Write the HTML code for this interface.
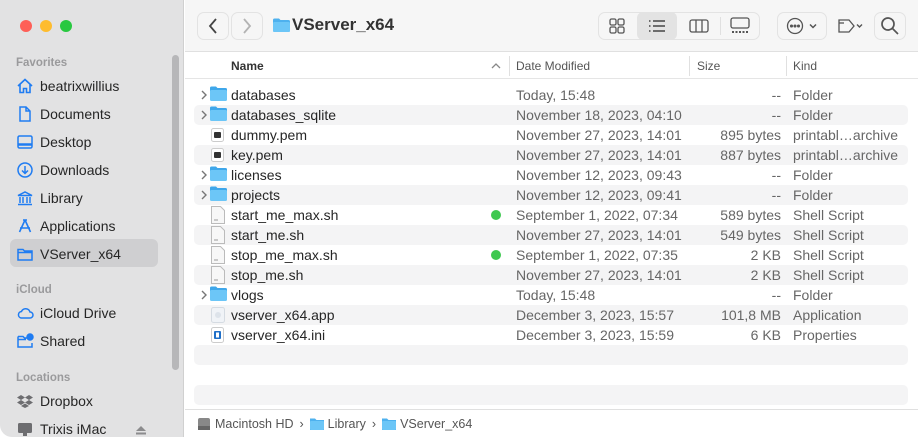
<!DOCTYPE html>
<html><head><meta charset="utf-8"><style>
*{margin:0;padding:0;box-sizing:border-box}
body{width:918px;height:437px;overflow:hidden;background:#fff;font-family:"Liberation Sans",sans-serif;position:relative}
.sb{position:absolute;left:0;top:0;width:184px;height:437px;background:#e2e2e3;border-right:1px solid #d0d0d0;border-bottom-left-radius:12px}
.dot{position:absolute;top:20px;width:12px;height:12px;border-radius:50%}
.sec{position:absolute;left:16px;font-size:11.5px;color:#9a9a9c;font-weight:bold}
.it{position:absolute;left:16px;font-size:14px;color:#262626;height:20px;line-height:20px;display:flex;align-items:center}
.it svg{width:18px;height:18px;margin-right:6px;flex:none}
.sel{position:absolute;left:10px;top:239px;width:148px;height:28px;background:#cfcfd1;border-radius:6px}
.scroll{position:absolute;left:172px;top:55px;width:7px;height:315px;background:#b7b7b9;border-radius:4px}
.tb{position:absolute;left:185px;top:0;right:0;height:52px;background:#f6f6f6;border-bottom:1px solid #e0e0e0;overflow:hidden}
.btn{position:absolute;top:12px;height:28px;border:1px solid #e3e3e3;border-radius:7px;background:#f6f6f6}
.hdr{position:absolute;left:185px;top:52px;right:0;height:27px;border-bottom:1px solid #e5e5e5;font-size:12px;color:#555}
.hdr span{position:absolute;top:7px}
.sep{position:absolute;top:4px;width:1px;height:20px;background:#e0e0e0}
.row{position:absolute;left:194px;width:714px;height:20px;border-radius:5px;font-size:14px;color:#262626}
.g{background:#f4f4f5}
.row span{position:absolute;top:2px;white-space:nowrap}
.c2,.c4{color:#666!important}
.c3{color:#666;right:127px;text-align:right}
.chev{position:absolute;left:6px;top:4px}
.ic{position:absolute;left:16px;top:1px}
.pb{position:absolute;left:185px;top:409px;right:0;height:28px;border-top:1px solid #e0e0e0;font-size:12.5px;color:#555;display:flex;align-items:center;padding-left:12px}
.pb svg{margin-right:4px}
</style></head><body>
<div class="sb">
<div class="dot" style="left:20px;background:#fe5f57"></div>
<div class="dot" style="left:40px;background:#febc2e"></div>
<div class="dot" style="left:60px;background:#28c840"></div>
<div class="sec" style="top:57px">Favorites</div>
<div class="sel"></div>
<div class="scroll"></div>
<div class="it" style="top:76px"><svg viewBox="0 0 18 18" fill="none" stroke="#1f7cf2" stroke-width="1.6"><path d="M2 9L9 2.5 16 9M4 7.5V15.5h3.5v-4h3v4H14V7.5"/></svg>beatrixwillius</div>
<div class="it" style="top:104px"><svg viewBox="0 0 18 18" fill="none" stroke="#1f7cf2" stroke-width="1.5"><path d="M4 2h6l4 4v10H4z M10 2v4h4"/></svg>Documents</div>
<div class="it" style="top:132px"><svg viewBox="0 0 18 18" fill="none" stroke="#1f7cf2" stroke-width="1.5"><rect x="2" y="3" width="14" height="12" rx="1.5"/><path d="M2 11.5h14" stroke-width="2.5"/></svg>Desktop</div>
<div class="it" style="top:160px"><svg viewBox="0 0 18 18" fill="none" stroke="#1f7cf2" stroke-width="1.5"><circle cx="9" cy="9" r="7"/><path d="M9 5v7M6 9.5l3 3 3-3"/></svg>Downloads</div>
<div class="it" style="top:188px"><svg viewBox="0 0 18 18" fill="none" stroke="#1f7cf2" stroke-width="1.5"><path d="M2 6.5L9 3l7 3.5zM4 8v6M7 8v6M11 8v6M14 8v6M2 15.5h14"/></svg>Library</div>
<div class="it" style="top:216px"><svg viewBox="0 0 18 18" fill="none" stroke="#1f7cf2" stroke-width="1.6"><path d="M9 3L3.5 15M9 3l5.5 12M4 11h10M7 3h4"/></svg>Applications</div>
<div class="it" style="top:244px"><svg viewBox="0 0 18 18" fill="none" stroke="#1f7cf2" stroke-width="1.5"><path d="M2 4.5h5l1.5 1.5H16v9H2zM2 7.5h14"/></svg>VServer_x64</div>
<div class="sec" style="top:284px">iCloud</div>
<div class="it" style="top:303px"><svg viewBox="0 0 18 18" fill="none" stroke="#1f7cf2" stroke-width="1.5"><path d="M5 14h9a3 3 0 0 0 0-6 4.5 4.5 0 0 0-8.5-.5A3.3 3.3 0 0 0 5 14z"/></svg>iCloud Drive</div>
<div class="it" style="top:331px"><svg viewBox="0 0 18 18" fill="none" stroke="#1f7cf2" stroke-width="1.5"><path d="M2 4.5h5l1.5 1.5H11M2 4.5v10.5h14V11M2 7.5h8"/><circle cx="14" cy="5" r="3" fill="#1f7cf2"/></svg>Shared</div>
<div class="sec" style="top:372px">Locations</div>
<div class="it" style="top:391px"><svg viewBox="0 0 18 18" fill="#6d6d70"><path d="M5 3l4 2.5-4 2.5-4-2.5zM13 3l4 2.5-4 2.5-4-2.5zM5 8l4 2.5-4 2.5-4-2.5zM13 8l4 2.5-4 2.5-4-2.5zM9 11.5l4 2.5-4 2-4-2z"/></svg>Dropbox</div>
<div class="it" style="top:419px"><svg viewBox="0 0 18 18" fill="#6d6d70"><rect x="2" y="3" width="14" height="10" rx="1.5"/><rect x="7" y="13" width="4" height="3"/></svg>Trixis iMac</div>
<svg style="position:absolute;left:135px;top:425px" width="12" height="10" viewBox="0 0 12 10" fill="#8b8b8d"><path d="M6 1l5 5H1z"/><rect x="1" y="7.5" width="10" height="2"/></svg>
</div>

<div class="tb">
<div class="btn" style="left:12px;width:32px"></div>
<div class="btn" style="left:46px;width:32px"></div>
<svg style="position:absolute;left:22px;top:17px" width="12" height="18" viewBox="0 0 12 18" fill="none" stroke="#444" stroke-width="1.8"><path d="M9 2L3 9l6 7"/></svg>
<svg style="position:absolute;left:56px;top:17px" width="12" height="18" viewBox="0 0 12 18" fill="none" stroke="#b3b3b3" stroke-width="1.8"><path d="M3 2l6 7-6 7"/></svg>
<svg style="position:absolute;left:88px;top:18px" width="17" height="14" viewBox="0 0 17 14"><path d="M0 2a1.5 1.5 0 0 1 1.5-1.5h4.5l1.5 1.5h8A1.5 1.5 0 0 1 17 3.5v9a1.5 1.5 0 0 1-1.5 1.5h-14A1.5 1.5 0 0 1 0 12.5z" fill="#4eb1ee"/><rect x="0" y="4" width="17" height="10" rx="1.5" fill="#6cc6f7"/></svg>
<div style="position:absolute;left:107px;top:15px;font-size:17px;font-weight:bold;color:#333">VServer_x64</div>
<div class="btn" style="left:413px;width:162px"></div>
<div style="position:absolute;left:452px;top:12px;width:40px;height:28px;background:#e3e3e3;border-radius:6px"></div>
<svg style="position:absolute;left:424px;top:18px" width="16" height="16" viewBox="0 0 16 16" fill="none" stroke="#555" stroke-width="1.3"><rect x="1" y="1" width="6" height="6" rx="1.5"/><rect x="9" y="1" width="6" height="6" rx="1.5"/><rect x="1" y="9" width="6" height="6" rx="1.5"/><rect x="9" y="9" width="6" height="6" rx="1.5"/></svg>
<svg style="position:absolute;left:463px;top:18px" width="18" height="16" viewBox="0 0 18 16" fill="none" stroke="#444" stroke-width="1.4"><path d="M5 3h12M5 8h12M5 13h12M1 3h1.5M1 8h1.5M1 13h1.5"/></svg>
<svg style="position:absolute;left:504px;top:18px" width="20" height="16" viewBox="0 0 20 16" fill="none" stroke="#555" stroke-width="1.3"><rect x="1" y="2" width="18" height="12" rx="2"/><path d="M7 2v12M13 2v12"/></svg>
<div style="position:absolute;left:535px;top:17px;width:1px;height:18px;background:#e0e0e0"></div>
<svg style="position:absolute;left:544px;top:17px" width="22" height="18" viewBox="0 0 22 18" fill="none" stroke="#555" stroke-width="1.3"><rect x="2" y="1" width="18" height="10" rx="2"/><path d="M3 15h16" stroke-dasharray="2 1.5" stroke-width="2"/></svg>
<div class="btn" style="left:592px;width:50px"></div>
<svg style="position:absolute;left:601px;top:17px" width="36" height="18" viewBox="0 0 36 18" fill="none" stroke="#555" stroke-width="1.3"><circle cx="9" cy="9" r="7.5"/><circle cx="5.5" cy="9" r=".9" fill="#555"/><circle cx="9" cy="9" r=".9" fill="#555"/><circle cx="12.5" cy="9" r=".9" fill="#555"/><path d="M24 7.5l3 3 3-3" stroke-width="1.5"/></svg>
<svg style="position:absolute;left:652px;top:17px" width="30" height="18" viewBox="0 0 30 18" fill="none" stroke="#555" stroke-width="1.3"><path d="M2 3h10l5 6-5 6H2z"/><path d="M2 6h5" /><path d="M20 7.5l2.5 2.5 2.5-2.5" stroke-width="1.4"/></svg>
<div class="btn" style="left:689px;width:32px"></div>
<svg style="position:absolute;left:695px;top:16px" width="20" height="20" viewBox="0 0 20 20" fill="none" stroke="#555" stroke-width="1.7"><circle cx="8" cy="8" r="6"/><path d="M12.5 12.5L18 18"/></svg>
</div>

<div class="hdr">
<span style="left:46px;font-weight:bold;color:#333">Name</span>
<svg style="position:absolute;left:306px;top:10px" width="10" height="7" viewBox="0 0 10 7" fill="none" stroke="#888" stroke-width="1.3"><path d="M1 6l4-4 4 4"/></svg>
<div class="sep" style="left:324px"></div>
<span style="left:331px">Date Modified</span>
<div class="sep" style="left:504px"></div>
<span style="left:512px">Size</span>
<div class="sep" style="left:601px"></div>
<span style="left:608px">Kind</span>
</div>

<div id="rows"></div>
<div class="row g" style="top:345px"></div>
<div class="row g" style="top:385px"></div>

<div class="pb">
<svg width="14" height="14" viewBox="0 0 14 14"><rect x="1" y="1" width="12" height="12" rx="2" fill="#888"/><rect x="1" y="9" width="12" height="4" fill="#666"/></svg><span>Macintosh HD</span><span style="margin:0 6px">›</span>
<svg width="14" height="13" viewBox="0 0 14 13"><path d="M0 1.5h5l1.5 1.5H14v10H0z" fill="#4eb1ee"/><rect x="0" y="4" width="14" height="9" rx="1" fill="#6cc6f7"/></svg><span>Library</span><span style="margin:0 6px">›</span>
<svg width="14" height="13" viewBox="0 0 14 13"><path d="M0 1.5h5l1.5 1.5H14v10H0z" fill="#4eb1ee"/><rect x="0" y="4" width="14" height="9" rx="1" fill="#6cc6f7"/></svg><span>VServer_x64</span>
</div>

<script>
var F='<svg class="ic" width="17" height="15" viewBox="0 0 17 15"><path d="M0 2a1.5 1.5 0 0 1 1.5-1.5h4.5l1.5 1.5h8A1.5 1.5 0 0 1 17 3.5v9a1.5 1.5 0 0 1-1.5 1.5h-14A1.5 1.5 0 0 1 0 12.5z" fill="#3fa7ea"/><rect x="0" y="4" width="17" height="11" rx="1.5" fill="#6cc6f7"/></svg>';
var C='<svg class="chev" width="8" height="12" viewBox="0 0 8 12" fill="none" stroke="#777" stroke-width="1.4"><path d="M2 2l4 4-4 4"/></svg>';
var P='<svg class="ic" style="left:17px;top:3px" width="13" height="14" viewBox="0 0 13 14"><rect x="0.5" y="0.5" width="12" height="13" rx="2" fill="#fff" stroke="#ccc"/><rect x="3" y="4" width="7" height="6" rx="1" fill="#333"/></svg>';
var S='<svg class="ic" style="left:17px;top:1px" width="14" height="18" viewBox="0 0 14 18"><path d="M.5.5h9l4 4v13H.5z" fill="#f7f7f7" stroke="#bbb"/><path d="M3 14h4" stroke="#999"/></svg>';
var A='<svg class="ic" style="left:17px;top:1px" width="14" height="18" viewBox="0 0 14 18"><rect x=".5" y="1.5" width="13" height="15" rx="2" fill="#f0f3f7" stroke="#d5dbe2"/><circle cx="7" cy="9" r="3" fill="#dde3ea"/></svg>';
var I='<svg class="ic" style="left:17px;top:2px" width="13" height="16" viewBox="0 0 13 16"><rect x=".5" y=".5" width="12" height="15" rx="2" fill="#fff" stroke="#ccc"/><rect x="3" y="4" width="7" height="8" rx="1" fill="#1f6fc8"/><rect x="5" y="5.5" width="3" height="5" fill="#fff"/></svg>';
var d=[
[F,1,'databases','Today, 15:48','--','Folder'],
[F,1,'databases_sqlite','November 18, 2023, 04:10','--','Folder'],
[P,0,'dummy.pem','November 27, 2023, 14:01','895 bytes','printabl…archive'],
[P,0,'key.pem','November 27, 2023, 14:01','887 bytes','printabl…archive'],
[F,1,'licenses','November 12, 2023, 09:43','--','Folder'],
[F,1,'projects','November 12, 2023, 09:41','--','Folder'],
[S,0,'start_me_max.sh','September 1, 2022, 07:34','589 bytes','Shell Script',1],
[S,0,'start_me.sh','November 27, 2023, 14:01','549 bytes','Shell Script'],
[S,0,'stop_me_max.sh','September 1, 2022, 07:35','2 KB','Shell Script',1],
[S,0,'stop_me.sh','November 27, 2023, 14:01','2 KB','Shell Script'],
[F,1,'vlogs','Today, 15:48','--','Folder'],
[A,0,'vserver_x64.app','December 3, 2023, 15:57','101,8 MB','Application'],
[I,0,'vserver_x64.ini','December 3, 2023, 15:59','6 KB','Properties']];
var h='';
d.forEach(function(r,i){
h+='<div class="row'+(i%2?' g':'')+'" style="top:'+(85+20*i)+'px">'+(r[1]?C:'')+r[0]+
'<span style="left:37px">'+r[2]+'</span>'+
(r[6]?'<div style="position:absolute;left:297px;top:5px;width:10px;height:10px;border-radius:50%;background:#3fc850"></div>':'')+
'<span class="c2" style="left:322px">'+r[3]+'</span><span class="c3">'+r[4]+'</span><span class="c4" style="left:599px">'+r[5]+'</span></div>';
});
document.getElementById('rows').innerHTML=h;
</script>
</body></html>
